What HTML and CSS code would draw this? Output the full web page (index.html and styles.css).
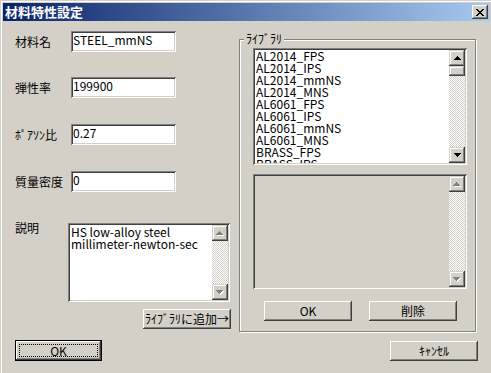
FILE: index.html
```html
<!DOCTYPE html>
<html lang="ja">
<head>
<meta charset="utf-8">
<link rel="stylesheet" href="styles.css">
</head>
<body>
<div class="window">
  <div class="titlebar">
    <span class="title">材料特性設定</span>
    <span class="close raised"><svg width="8" height="7" viewBox="0 0 8 7"><path d="M0 0h2v1H0zM6 0h2v1H6zM1 1h2v1H1zM5 1h2v1H5zM2 2h4v1H2zM3 3h2v1H3zM2 4h4v1H2zM1 5h2v1H1zM5 5h2v1H5zM0 6h2v1H0zM6 6h2v1H6z"/></svg></span>
  </div>
  <div class="content">
    <div class="left">
      <div class="row r1"><span class="lbl">材料名</span><div class="field sunken">STEEL_mmNS</div></div>
      <div class="row r2"><span class="lbl">弾性率</span><div class="field sunken">199900</div></div>
      <div class="row r3"><span class="lbl">ﾎﾟｱｿﾝ比</span><div class="field sunken">0.27</div></div>
      <div class="row r4"><span class="lbl">質量密度</span><div class="field sunken">0</div></div>
      <div class="desc">
        <span class="lbl dl">説明</span>
        <div class="memo sunken">
          <div class="text">HS low-alloy steel<br>millimeter-newton-sec</div>
          <div class="vscroll">
            <div class="sb"><svg width="8" height="5" viewBox="0 0 8 5"><path fill="#fff" d="M4 1h1v1h1v1h1v1h1v1H1V4h1V3h1V2h1z"/><path fill="#808080" d="M3 0h1v1h1v1h1v1h1v1H0V3h1V2h1V1h1z"/></svg></div>
            <div class="track"></div>
            <div class="sb"><svg width="8" height="5" viewBox="0 0 8 5"><path fill="#fff" d="M1 1h7v1H7v1H6v1H5v1H4V4H3V3H2V2H1z"/><path fill="#808080" d="M0 0h7v1H6v1H5v1H4v1H3V3H2V2H1V1H0z"/></svg></div>
          </div>
        </div>
      </div>
      <div class="btn raised add">ﾗｲﾌﾞﾗﾘに追加→</div>
      <div class="btn okdef">OK</div>
    </div>
    <div class="right">
      <div class="group">
        <div class="legend">ﾗｲﾌﾞﾗﾘ</div>
        <div class="listbox sunken">
          <div class="items">
            <div>AL2014_FPS</div>
            <div>AL2014_IPS</div>
            <div>AL2014_mmNS</div>
            <div>AL2014_MNS</div>
            <div>AL6061_FPS</div>
            <div>AL6061_IPS</div>
            <div>AL6061_mmNS</div>
            <div>AL6061_MNS</div>
            <div>BRASS_FPS</div>
            <div>BRASS_IPS</div>
            <div>BRASS_mmNS</div>
          </div>
          <div class="vscroll">
            <div class="sb"><svg width="7" height="4" viewBox="0 0 7 4"><path d="M3 0h1v1h1v1h1v1h1v1H0V3h1V2h1V1h1z"/></svg></div>
            <div class="sb thumb"></div>
            <div class="track"></div>
            <div class="sb"><svg width="7" height="4" viewBox="0 0 7 4"><path d="M0 0h7v1H6v1H5v1H4v1H3V3H2V2H1V1H0z"/></svg></div>
          </div>
        </div>
        <div class="listbox sunken empty">
          <div class="items"></div>
          <div class="vscroll">
            <div class="sb"><svg width="8" height="5" viewBox="0 0 8 5"><path fill="#fff" d="M4 1h1v1h1v1h1v1h1v1H1V4h1V3h1V2h1z"/><path fill="#808080" d="M3 0h1v1h1v1h1v1h1v1H0V3h1V2h1V1h1z"/></svg></div>
            <div class="track"></div>
            <div class="sb"><svg width="8" height="5" viewBox="0 0 8 5"><path fill="#fff" d="M1 1h7v1H7v1H6v1H5v1H4V4H3V3H2V2H1z"/><path fill="#808080" d="M0 0h7v1H6v1H5v1H4v1H3V3H2V2H1V1H0z"/></svg></div>
          </div>
        </div>
        <div class="gbtns">
          <div class="btn raised">OK</div>
          <div class="btn raised">削除</div>
        </div>
      </div>
      <div class="btn raised cancel">ｷｬﾝｾﾙ</div>
    </div>
  </div>
</div>
</body>
</html>
```

FILE: styles.css
```css
* { box-sizing: border-box; margin: 0; padding: 0; }
html, body { width: 491px; height: 373px; overflow: hidden; }
body {
  background: #d4d0c8;
  font-family: "Noto Sans CJK JP", "Noto Sans", sans-serif;
  font-size: 12px;
  line-height: 12px;
  color: #000;
}
.window {
  width: 491px;
  height: 373px;
  padding: 3px 1px 0 3px;
  box-shadow: inset 1px 1px #d4d0c8, inset 2px 2px #fff;
}
.titlebar {
  height: 18px;
  display: flex;
  align-items: flex-start;
  justify-content: space-between;
  padding: 0 2px;
  background: linear-gradient(to right, #0a246a, #a6caf0);
}
.title {
  color: #fff;
  font-weight: bold;
  font-size: 13px;
  line-height: 18px;
}
.close {
  margin-top: 2px;
  width: 16px;
  height: 14px;
  display: flex;
  align-items: center;
  justify-content: center;
}
.raised {
  background: #d4d0c8;
  box-shadow: inset -1px -1px #404040, inset 1px 1px #fff, inset -2px -2px #808080, inset 2px 2px #d4d0c8;
}
.sunken {
  background: #fff;
  padding: 2px;
  box-shadow: inset 1px 1px #808080, inset -1px -1px #fff, inset 2px 2px #404040, inset -2px -2px #d4d0c8;
}
.content {
  display: grid;
  grid-template-columns: 236px 1fr;
}
.left { padding-left: 12px; }
.row { display: flex; align-items: center; }
.r1 { margin-top: 10px; }
.r2 { margin-top: 25px; }
.r3 { margin-top: 26px; }
.r4 { margin-top: 26px; }
.lbl { width: 56px; white-space: nowrap; }
.field {
  width: 105px;
  height: 21px;
  padding: 3px 2px 2px 2px;
  white-space: nowrap;
}
.desc { display: flex; align-items: flex-start; margin-top: 31px; }
.dl { width: 53px; margin-top: -1px; }
.memo {
  width: 162px;
  height: 79px;
  display: flex;
}
.memo .text { flex: 1; padding: 1px 0 0 1px; white-space: nowrap; overflow: hidden; }
.vscroll {
  width: 16px;
  display: flex;
  flex-direction: column;
}
.sb {
  width: 16px;
  height: 16px;
  flex: none;
  display: flex;
  align-items: center;
  justify-content: center;
  background: #d4d0c8;
  box-shadow: inset -1px -1px #404040, inset 1px 1px #d4d0c8, inset -2px -2px #808080, inset 2px 2px #fff;
}
.sb.thumb { height: 10px; }
.track {
  flex: 1;
  background: repeating-conic-gradient(#d4d0c8 0 25%, #fff 0 50%) 0 0 / 2px 2px;
}
.btn {
  display: flex;
  align-items: center;
  justify-content: center;
  width: 88px;
  height: 20px;
  white-space: nowrap;
}
.add { margin: 7px 0 0 128px; }
.okdef {
  position: relative;
  margin-top: 11px;
  width: 87px;
  height: 21px;
  border: 1px solid #000;
  background: #d4d0c8;
  box-shadow: inset -1px -1px #404040, inset 1px 1px #fff, inset -2px -2px #808080, inset 2px 2px #d4d0c8;
}
.okdef::after {
  content: "";
  position: absolute;
  inset: 3px;
  border: 1px dotted #000;
}
.group {
  margin-top: 18px;
  width: 237px;
  height: 293px;
  border: 1px solid #808080;
  box-shadow: 1px 1px #fff, inset 1px 1px #fff;
  padding-left: 13px;
}
.legend {
  display: table;
  margin: -7px 0 0 -9px;
  padding: 0 2px;
  background: #d4d0c8;
  line-height: 12px;
}
.listbox {
  margin-top: 3px;
  width: 214px;
  height: 117px;
  display: flex;
}
.items { flex: 1; overflow: hidden; padding-left: 1px; white-space: nowrap; }
.listbox.empty {
  margin-top: 9px;
  height: 115px;
  background: #d4d0c8;
}
.gbtns {
  display: flex;
  gap: 17px;
  margin-top: 12px;
  padding-left: 11px;
}
.cancel { margin: 9px 0 0 151px; }
```
